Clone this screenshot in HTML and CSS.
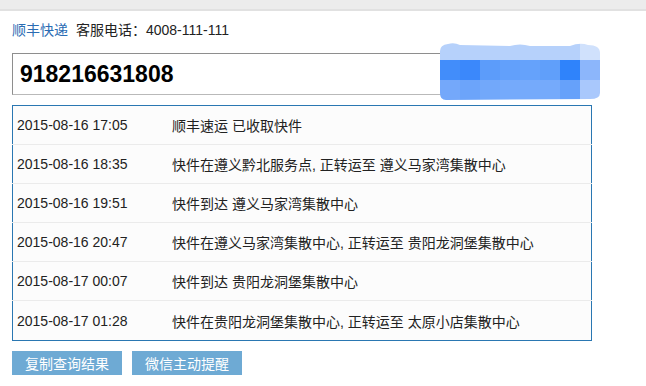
FILE: index.html
```html
<!DOCTYPE html>
<html lang="zh-CN">
<head>
    <meta charset="UTF-8">
    <title>快递查询</title>
    <link rel="stylesheet" href="styles.css">
</head>
<body>
    <div class="topbar"></div>
    <div class="page">
        <div class="company">
            <a class="company-name" href="#">顺丰快递</a>
            <span class="phone">客服电话：4008-111-111</span>
        </div>

        <div class="search">
            <input type="text" class="code-input" value="918216631808">
            <svg class="mosaic" width="160" height="57" viewBox="0 0 160 57">
                <defs>
                    <clipPath id="blob">
                        <path d="M0 8 Q0 2 8 1 Q14 -1 20 2 L70 3 Q80 0 90 3 L130 3 Q140 -1 148 2 Q160 2 160 10 L160 50 Q160 56 150 56 L6 57 Q0 57 0 50 Z"/>
                    </clipPath>
                </defs>
                <g clip-path="url(#blob)">
                    <rect x="0" y="0" width="140" height="17" fill="#b6d1fb"/>
                    <rect x="140" y="0" width="20" height="17" fill="#d0e1fc"/>
                    <rect x="0" y="17" width="20" height="20" fill="#428dfa"/>
                    <rect x="20" y="17" width="20" height="20" fill="#3b88fb"/>
                    <rect x="40" y="17" width="20" height="20" fill="#5c9cfa"/>
                    <rect x="60" y="17" width="20" height="20" fill="#62a0fb"/>
                    <rect x="80" y="17" width="20" height="20" fill="#65a2fb"/>
                    <rect x="100" y="17" width="20" height="20" fill="#609ffa"/>
                    <rect x="120" y="17" width="20" height="20" fill="#2f83fb"/>
                    <rect x="140" y="17" width="20" height="20" fill="#8cb6fb"/>
                    <rect x="0" y="37" width="20" height="20" fill="#74a8fa"/>
                    <rect x="20" y="37" width="20" height="20" fill="#6ca4fa"/>
                    <rect x="40" y="37" width="20" height="20" fill="#72a8fa"/>
                    <rect x="60" y="37" width="60" height="20" fill="#75aafb"/>
                    <rect x="120" y="37" width="20" height="20" fill="#66a1fa"/>
                    <rect x="140" y="37" width="20" height="20" fill="#a9c8fc"/>
                </g>
            </svg>
        </div>

        <table class="track">
            <tr><td class="time">2015-08-16 17:05</td><td>顺丰速运 已收取快件</td></tr>
            <tr><td class="time">2015-08-16 18:35</td><td>快件在遵义黔北服务点, 正转运至 遵义马家湾集散中心</td></tr>
            <tr><td class="time">2015-08-16 19:51</td><td>快件到达 遵义马家湾集散中心</td></tr>
            <tr><td class="time">2015-08-16 20:47</td><td>快件在遵义马家湾集散中心, 正转运至 贵阳龙洞堡集散中心</td></tr>
            <tr><td class="time">2015-08-17 00:07</td><td>快件到达 贵阳龙洞堡集散中心</td></tr>
            <tr><td class="time">2015-08-17 01:28</td><td>快件在贵阳龙洞堡集散中心, 正转运至 太原小店集散中心</td></tr>
        </table>

        <div class="actions">
            <button class="act-btn">复制查询结果</button>
            <button class="act-btn">微信主动提醒</button>
        </div>
    </div>
</body>
</html>
```

FILE: styles.css
```css
body {
    margin: 0;
    background: #fff;
    font-family: "Liberation Sans", "Noto Sans CJK SC", sans-serif;
    font-size: 14px;
    color: #222;
}
.topbar {
    height: 9px;
    background: #ececec;
    border-bottom: 2px solid #e1e1e1;
}
.page {
    padding: 0 12px;
}
.company {
    height: 20px;
    line-height: 20px;
    margin-top: 9px;
}
.company-name {
    color: #2b6cb3;
    text-decoration: none;
    margin-right: 4px;
}
.phone {
    color: #222;
}
.search {
    position: relative;
    margin-top: 13px;
    height: 42px;
}
.code-input {
    box-sizing: border-box;
    width: 440px;
    height: 42px;
    margin: 0;
    padding: 0 7px;
    border: 1px solid #8e8e8e;
    border-bottom-color: #b9b9b9;
    border-right-color: #b9b9b9;
    font-family: "Liberation Sans", sans-serif;
    font-size: 23px;
    font-weight: bold;
    color: #000;
    outline: none;
}
.mosaic {
    position: absolute;
    left: 428px;
    top: -10px;
}
.track {
    width: 580px;
    margin-top: 10px;
    border: 1px solid #2a77b2;
    border-collapse: collapse;
    background: #fcfcfc;
}
.track td {
    height: 38px;
    padding: 0;
    border-bottom: 1px solid #ebebeb;
    white-space: nowrap;
}
.track tr:last-child td {
    height: 39px;
    border-bottom: none;
}
.track .time {
    width: 155px;
    padding-left: 4px;
}
.actions {
    display: flex;
    gap: 10px;
    margin-top: 10px;
}
.act-btn {
    width: 110px;
    height: 24px;
    padding: 0;
    border: none;
    background: #6eaad4;
    color: #fff;
    font-family: "Liberation Sans", "Noto Sans CJK SC", sans-serif;
    font-size: 14px;
    cursor: pointer;
}
```
